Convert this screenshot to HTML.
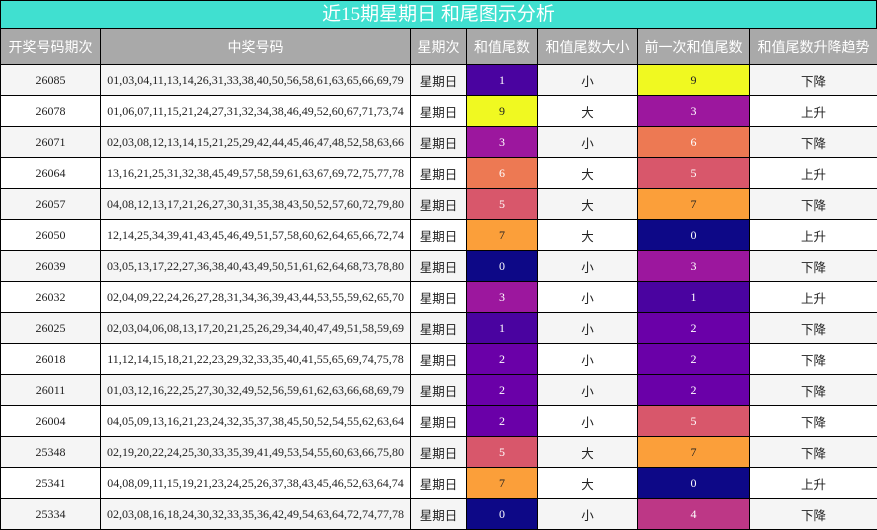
<!DOCTYPE html>
<html><head><meta charset="utf-8"><style>
body{margin:0;width:877px;height:530px;overflow:hidden;background:#fff;font-family:"Liberation Serif","Noto Sans CJK SC",serif;}
.title{background:#40e0d0;border:1px solid #000;border-bottom:none;box-sizing:border-box;height:28px;color:#fff;text-align:center;font:19px/27px "Liberation Serif","Noto Sans CJK SC",sans-serif;}
table{border-collapse:collapse;table-layout:fixed;width:877px;}
td,th{border:1px solid #000;text-align:center;padding:0;font-size:12px;color:#222;white-space:nowrap;overflow:hidden;}
th{background:#a9a9a9;color:#fff;font-weight:normal;font-size:14px;height:35px;font-family:"Liberation Sans","Noto Sans CJK SC",sans-serif;}
td{height:30px;}
tr:nth-child(even) td{background:#f5f5f5}
tr:nth-child(odd) td{background:#fff}
td.c{font-family:"Liberation Sans","Noto Sans CJK SC",sans-serif;font-size:12.5px}
td.n{font-size:12px}
tr td.d0{background:#0d0887;color:#fff}tr td.d1{background:#4a03a0;color:#fff}tr td.d2{background:#6a00a8;color:#fff}
tr td.d3{background:#9c179e;color:#fff}tr td.d4{background:#bd3786;color:#fff}tr td.d5{background:#d8576b;color:#fff}
tr td.d6{background:#ed7953;color:#fff}tr td.d7{background:#fb9f3a;color:#222}tr td.d9{background:#f0f921;color:#222}
</style></head><body>
<div class="title">近15期星期日 和尾图示分析</div>
<table>
<colgroup><col style="width:100px"><col style="width:310px"><col style="width:56px"><col style="width:71px"><col style="width:100px"><col style="width:112px"><col style="width:128px"></colgroup>
<tr><th>开奖号码期次</th><th>中奖号码</th><th>星期次</th><th>和值尾数</th><th>和值尾数大小</th><th>前一次和值尾数</th><th>和值尾数升降趋势</th></tr>
<tr><td>26085</td><td class="n">01,03,04,11,13,14,26,31,33,38,40,50,56,58,61,63,65,66,69,79</td><td class="c">星期日</td><td class="d1">1</td><td class="c">小</td><td class="d9">9</td><td class="c">下降</td></tr>
<tr><td>26078</td><td class="n">01,06,07,11,15,21,24,27,31,32,34,38,46,49,52,60,67,71,73,74</td><td class="c">星期日</td><td class="d9">9</td><td class="c">大</td><td class="d3">3</td><td class="c">上升</td></tr>
<tr><td>26071</td><td class="n">02,03,08,12,13,14,15,21,25,29,42,44,45,46,47,48,52,58,63,66</td><td class="c">星期日</td><td class="d3">3</td><td class="c">小</td><td class="d6">6</td><td class="c">下降</td></tr>
<tr><td>26064</td><td class="n">13,16,21,25,31,32,38,45,49,57,58,59,61,63,67,69,72,75,77,78</td><td class="c">星期日</td><td class="d6">6</td><td class="c">大</td><td class="d5">5</td><td class="c">上升</td></tr>
<tr><td>26057</td><td class="n">04,08,12,13,17,21,26,27,30,31,35,38,43,50,52,57,60,72,79,80</td><td class="c">星期日</td><td class="d5">5</td><td class="c">大</td><td class="d7">7</td><td class="c">下降</td></tr>
<tr><td>26050</td><td class="n">12,14,25,34,39,41,43,45,46,49,51,57,58,60,62,64,65,66,72,74</td><td class="c">星期日</td><td class="d7">7</td><td class="c">大</td><td class="d0">0</td><td class="c">上升</td></tr>
<tr><td>26039</td><td class="n">03,05,13,17,22,27,36,38,40,43,49,50,51,61,62,64,68,73,78,80</td><td class="c">星期日</td><td class="d0">0</td><td class="c">小</td><td class="d3">3</td><td class="c">下降</td></tr>
<tr><td>26032</td><td class="n">02,04,09,22,24,26,27,28,31,34,36,39,43,44,53,55,59,62,65,70</td><td class="c">星期日</td><td class="d3">3</td><td class="c">小</td><td class="d1">1</td><td class="c">上升</td></tr>
<tr><td>26025</td><td class="n">02,03,04,06,08,13,17,20,21,25,26,29,34,40,47,49,51,58,59,69</td><td class="c">星期日</td><td class="d1">1</td><td class="c">小</td><td class="d2">2</td><td class="c">下降</td></tr>
<tr><td>26018</td><td class="n">11,12,14,15,18,21,22,23,29,32,33,35,40,41,55,65,69,74,75,78</td><td class="c">星期日</td><td class="d2">2</td><td class="c">小</td><td class="d2">2</td><td class="c">下降</td></tr>
<tr><td>26011</td><td class="n">01,03,12,16,22,25,27,30,32,49,52,56,59,61,62,63,66,68,69,79</td><td class="c">星期日</td><td class="d2">2</td><td class="c">小</td><td class="d2">2</td><td class="c">下降</td></tr>
<tr><td>26004</td><td class="n">04,05,09,13,16,21,23,24,32,35,37,38,45,50,52,54,55,62,63,64</td><td class="c">星期日</td><td class="d2">2</td><td class="c">小</td><td class="d5">5</td><td class="c">下降</td></tr>
<tr><td>25348</td><td class="n">02,19,20,22,24,25,30,33,35,39,41,49,53,54,55,60,63,66,75,80</td><td class="c">星期日</td><td class="d5">5</td><td class="c">大</td><td class="d7">7</td><td class="c">下降</td></tr>
<tr><td>25341</td><td class="n">04,08,09,11,15,19,21,23,24,25,26,37,38,43,45,46,52,63,64,74</td><td class="c">星期日</td><td class="d7">7</td><td class="c">大</td><td class="d0">0</td><td class="c">上升</td></tr>
<tr><td>25334</td><td class="n">02,03,08,16,18,24,30,32,33,35,36,42,49,54,63,64,72,74,77,78</td><td class="c">星期日</td><td class="d0">0</td><td class="c">小</td><td class="d4">4</td><td class="c">下降</td></tr>
</table>
</body></html>
